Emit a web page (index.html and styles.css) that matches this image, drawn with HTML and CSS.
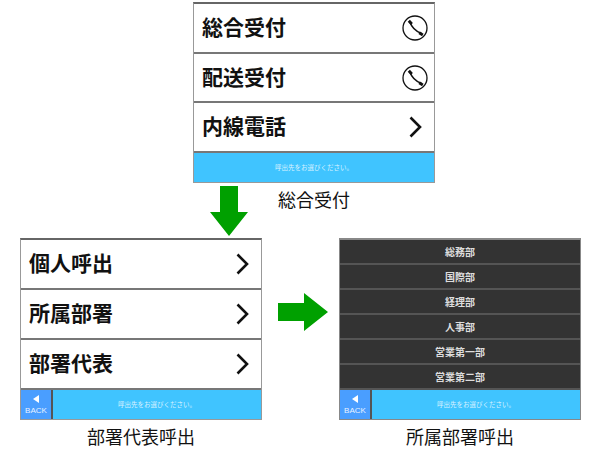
FILE: index.html
```html
<!DOCTYPE html>
<html lang="ja">
<head>
    <meta charset="UTF-8">
    <title>呼出フロー</title>
    <link rel="stylesheet" href="styles.css">
</head>
<body>
    <div class="top-row">
        <div class="panel">
            <div class="row"><span>総合受付</span>
                <svg class="icon-phone" width="26" height="26" viewBox="0 0 26 26"><circle cx="13" cy="13" r="12" fill="none" stroke="#111" stroke-width="1.3"/><path d="M7.800 6.800C9.500 11.800 14 16.500 19.500 18.500" fill="none" stroke="#111" stroke-width="1.500"/><path d="M6.800 5.800L9.800 9M17.200 17.800L20.800 20" fill="none" stroke="#111" stroke-width="3"/></svg>
            </div>
            <div class="row"><span>配送受付</span>
                <svg class="icon-phone" width="26" height="26" viewBox="0 0 26 26"><circle cx="13" cy="13" r="12" fill="none" stroke="#111" stroke-width="1.3"/><path d="M7.800 6.800C9.500 11.800 14 16.500 19.500 18.500" fill="none" stroke="#111" stroke-width="1.500"/><path d="M6.800 5.800L9.800 9M17.200 17.800L20.800 20" fill="none" stroke="#111" stroke-width="3"/></svg>
            </div>
            <div class="row"><span>内線電話</span>
                <svg class="icon-chevron" width="14" height="22" viewBox="0 0 14 22"><path d="M2.500 1.500L12 11 2.500 20.500" fill="none" stroke="#111" stroke-width="2.600"/></svg>
            </div>
            <div class="footer"><div class="message">呼出先をお選びください。</div></div>
        </div>
        <div class="between">
            <svg class="arrow-down" width="38" height="50" viewBox="0 0 38 50"><path d="M10 0h18v26h10L19 50 0 26h10z" fill="#00a000"/></svg>
            <div class="caption caption-top">総合受付</div>
        </div>
    </div>

    <div class="bottom-row">
        <div class="column">
            <div class="panel panel-tall">
                <div class="row"><span>個人呼出</span>
                    <svg class="icon-chevron" width="14" height="22" viewBox="0 0 14 22"><path d="M2.500 1.500L12 11 2.500 20.500" fill="none" stroke="#111" stroke-width="2.600"/></svg>
                </div>
                <div class="row"><span>所属部署</span>
                    <svg class="icon-chevron" width="14" height="22" viewBox="0 0 14 22"><path d="M2.500 1.500L12 11 2.500 20.500" fill="none" stroke="#111" stroke-width="2.600"/></svg>
                </div>
                <div class="row"><span>部署代表</span>
                    <svg class="icon-chevron" width="14" height="22" viewBox="0 0 14 22"><path d="M2.500 1.500L12 11 2.500 20.500" fill="none" stroke="#111" stroke-width="2.600"/></svg>
                </div>
                <div class="footer">
                    <div class="back"><span class="back-tri"></span>BACK</div>
                    <div class="message">呼出先をお選びください。</div>
                </div>
            </div>
            <div class="caption">部署代表呼出</div>
        </div>

        <svg class="arrow-right" width="50" height="38" viewBox="0 0 50 38"><path d="M0 10h26V0l24 19-24 19V28H0z" fill="#00a000"/></svg>

        <div class="column">
            <div class="panel panel-tall panel-dark">
                <div class="dark-row">総務部</div>
                <div class="dark-row">国際部</div>
                <div class="dark-row">経理部</div>
                <div class="dark-row">人事部</div>
                <div class="dark-row">営業第一部</div>
                <div class="dark-row">営業第二部</div>
                <div class="footer">
                    <div class="back"><span class="back-tri"></span>BACK</div>
                    <div class="message">呼出先をお選びください。</div>
                </div>
            </div>
            <div class="caption">所属部署呼出</div>
        </div>
    </div>
</body>
</html>
```

FILE: styles.css
```css
body {
    margin: 0;
    background-color: #fff;
    color: #111;
    font-family: "Liberation Sans", "Noto Sans CJK JP", sans-serif;
}
.top-row {
    padding-top: 2px;
    padding-left: 193px;
}
.panel {
    box-sizing: border-box;
    display: flex;
    flex-direction: column;
    width: 242px;
    height: 181px;
    border: 1px solid #999;
    border-top: 2px solid #666;
    background-color: #fff;
}
.panel-tall {
    height: 182px;
}
.row {
    display: flex;
    flex: 1;
    align-items: center;
    justify-content: space-between;
    padding: 0 12px 0 8px;
    border-bottom: 2px solid #777;
    font-size: 21px;
    font-weight: bold;
}
.row span {
    margin-bottom: 4px;
}
.icon-phone {
    margin-right: -6px;
}
.footer {
    display: flex;
    flex: none;
    height: 29px;
    background-color: #40c4ff;
}
.message {
    flex: 1;
    align-self: center;
    margin-bottom: 2px;
    color: #d8f2ff;
    font-size: 6.5px;
    text-align: center;
}
.back {
    display: flex;
    flex: none;
    flex-direction: column;
    align-items: center;
    justify-content: center;
    box-sizing: border-box;
    width: 32px;
    border-right: 2px solid #555;
    background-color: #4a9eff;
    color: #e8f2ff;
    font-size: 8px;
}
.back-tri {
    width: 0;
    height: 0;
    margin-bottom: 3px;
    border-top: 4px solid transparent;
    border-bottom: 4px solid transparent;
    border-right: 6px solid #fff;
}
.between {
    display: flex;
    align-items: flex-start;
    height: 55px;
}
.arrow-down {
    margin-top: 3px;
    margin-left: 17px;
}
.caption {
    font-size: 18px;
    line-height: 26px;
    text-align: center;
}
.caption-top {
    margin-top: 5px;
    margin-left: 30px;
}
.bottom-row {
    display: flex;
    align-items: flex-start;
    padding-left: 20px;
}
.column {
    width: 242px;
}
.column .caption {
    margin-top: 5px;
}
.arrow-right {
    margin: 55px 11px 0 16px;
}
.panel-dark {
    border-color: #888;
    background-color: #333;
}
.dark-row {
    display: flex;
    flex: 1;
    align-items: center;
    justify-content: center;
    border-bottom: 2px solid #555;
    color: #ddd;
    font-size: 10px;
    font-weight: bold;
}
```
